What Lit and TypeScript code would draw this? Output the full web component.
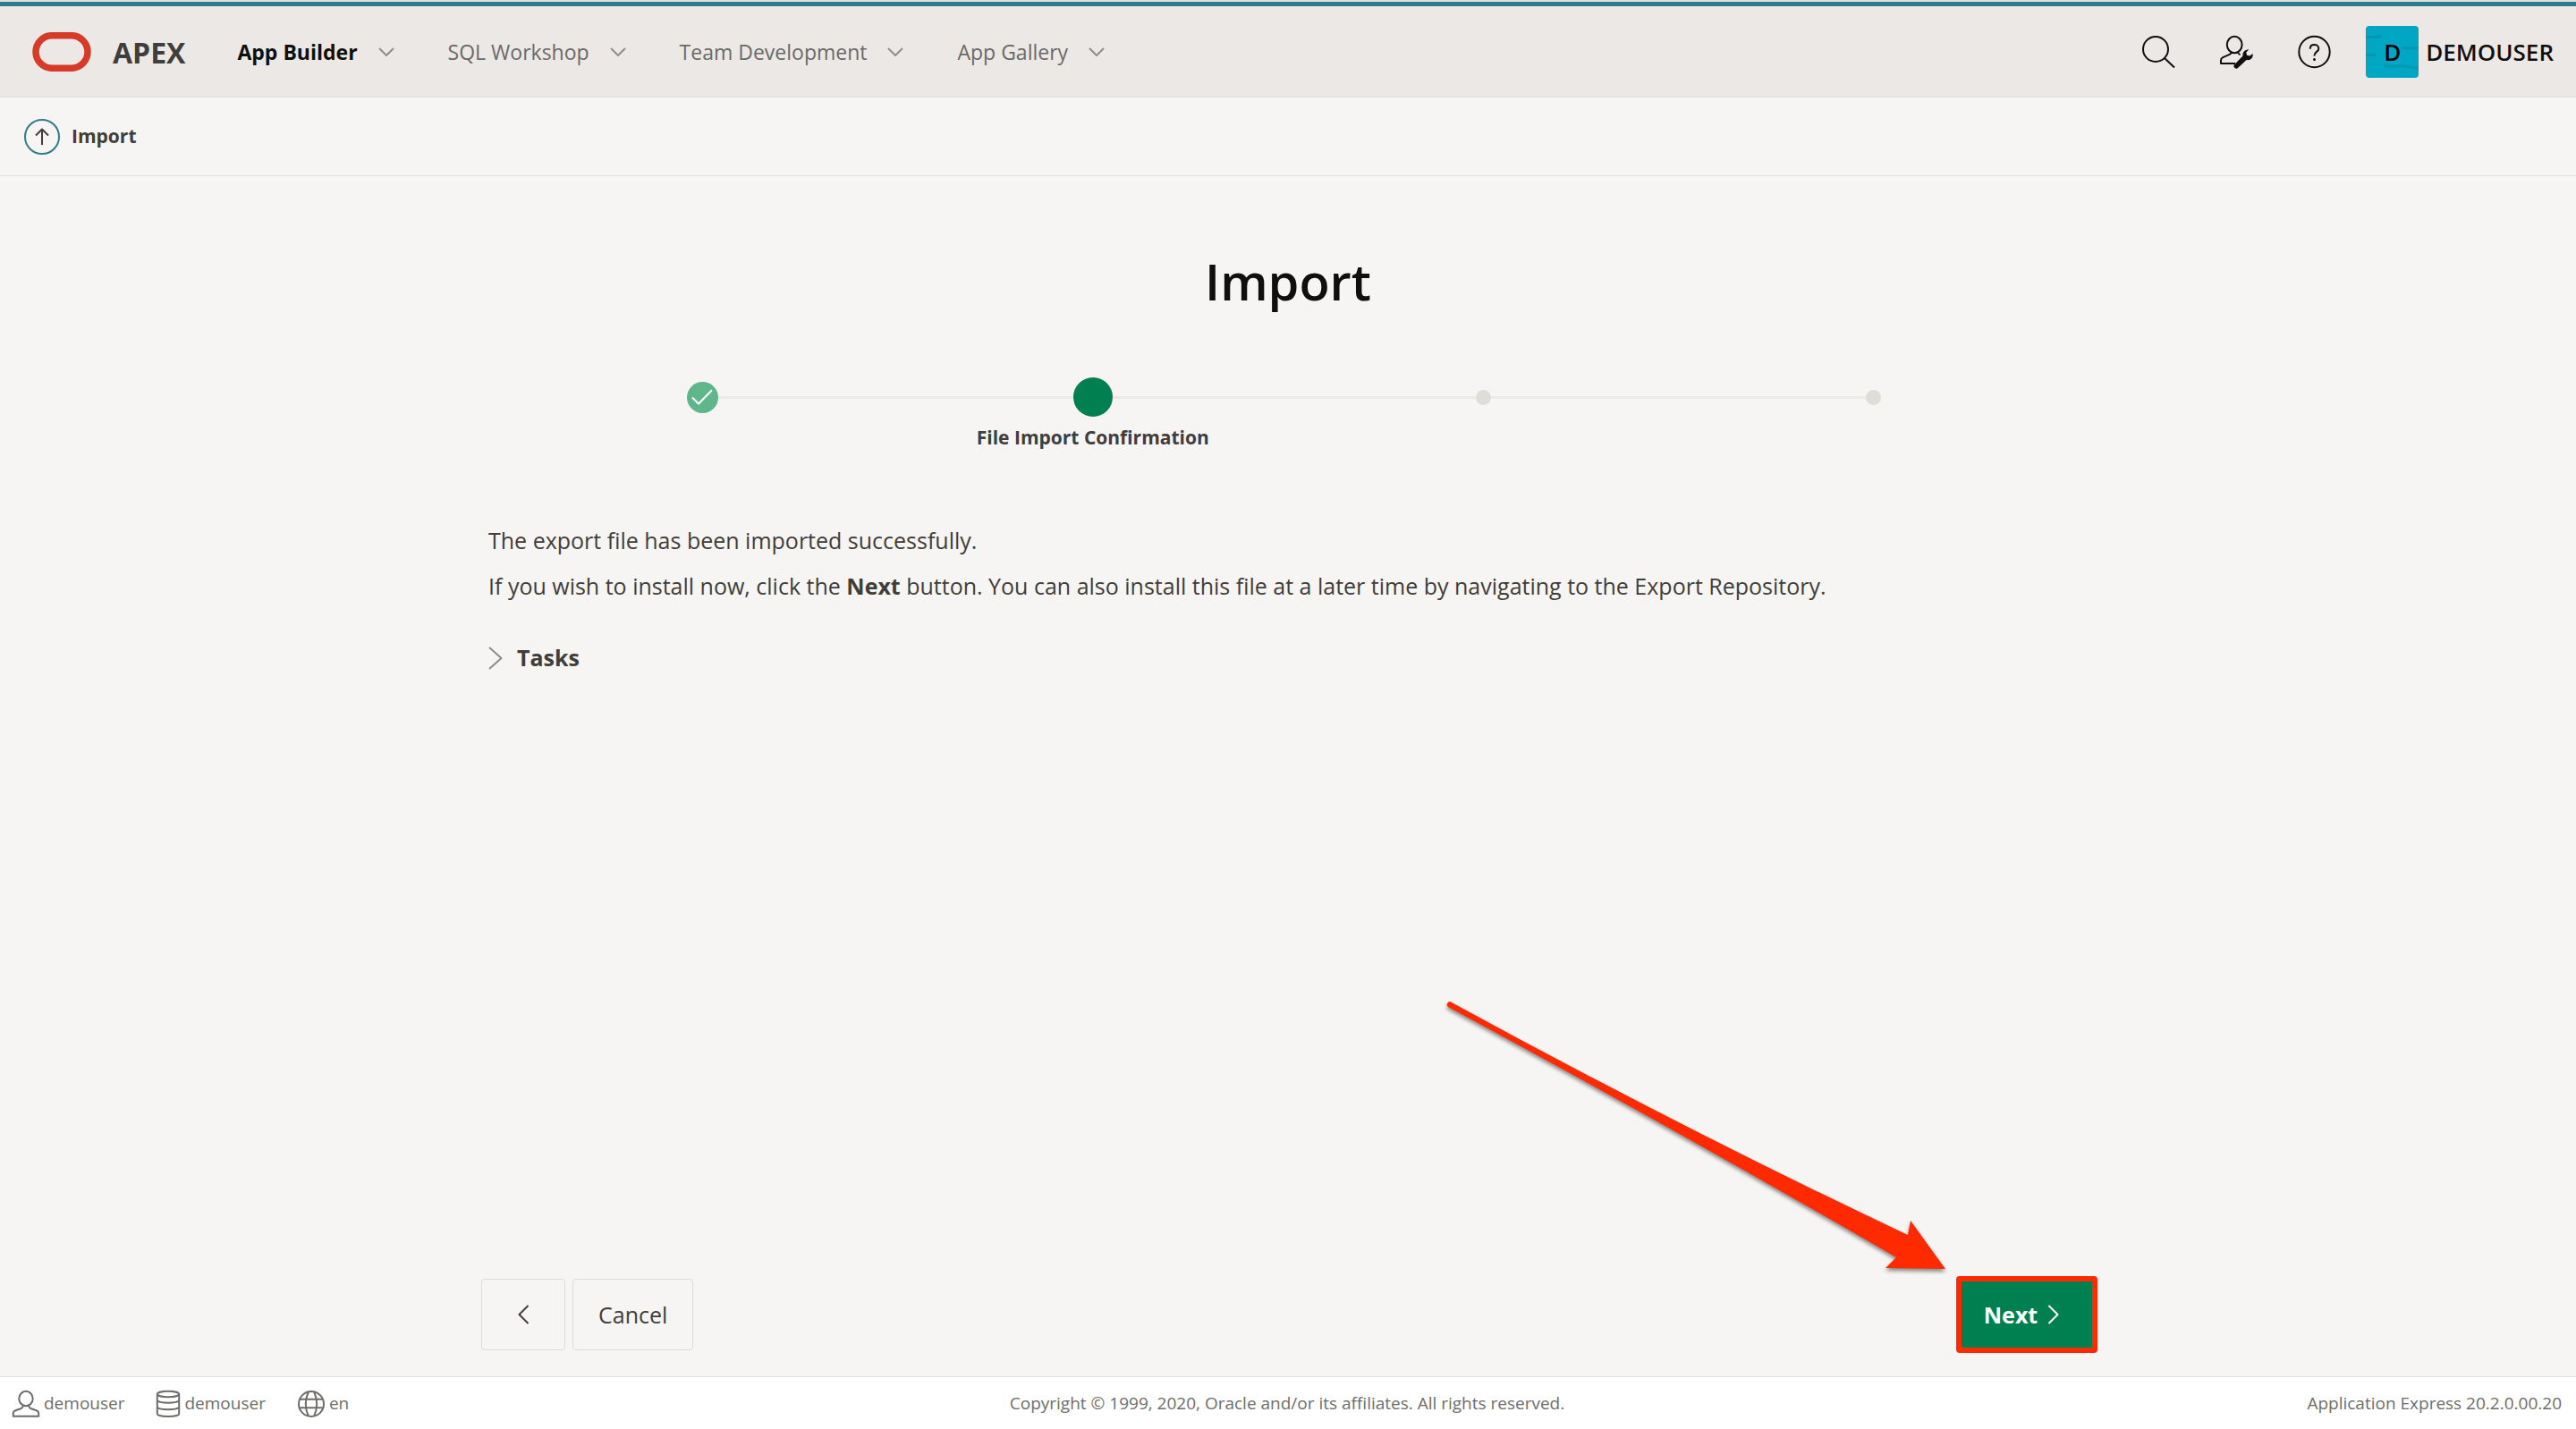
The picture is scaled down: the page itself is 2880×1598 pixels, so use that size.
import { LitElement, html, css, svg } from "lit";
import { customElement, property } from "lit/decorators.js";

const icons: Record<string, { box: string; art: unknown }> = {
  search: {
    box: "0 0 37 37",
    art: svg`<circle cx="15" cy="15" r="14"/><path d="M25 25 36 35.500"/>`,
  },
  admin: {
    box: "0 0 37 37",
    art: svg`<path d="M12.500 18.200c.2 1.600-.6 2.200-1.800 2.700l-7.400 3.200C1.600 24.900 1 26 1 27.600V31h16M20 18.200c.1 1.600.9 2.300 2.600 3.100"/>
      <ellipse cx="16.200" cy="10" rx="8.400" ry="9.200"/>
      <path fill="currentColor" stroke="none" d="M32.400 15.200c-4.600.2-7.600 3.400-6.900 7.400L16.300 31.900a2.700 2.700 0 0 0 3.900 3.900l9.400-8.800c4.200.9 7.700-2 7.100-7l-3.500 2.600-3.200-.8-.7-3.200z"/>`,
  },
  help: {
    box: "0 0 37 37",
    art: svg`<circle cx="18.500" cy="18" r="17.200"/><path d="M13.800 14.800v-.4c0-2.600 2-4.300 4.700-4.300s4.800 1.700 4.800 4.300c0 3.400-4.800 3.600-4.800 7.600v.6"/><circle cx="18.500" cy="26.500" r="1.500" fill="currentColor" stroke="none"/>`,
  },
  down: { box: "0 0 18 10", art: svg`<path d="M1 1 9 9 17 1"/>` },
  up: { box: "0 0 16 20", art: svg`<path d="M8 19V1.500M1 8.500l7-7 7 7"/>` },
  check: { box: "0 0 24 18", art: svg`<path d="M1 9.500 8 16.500 23 1.200"/>` },
  disclose: { box: "0 0 16 26", art: svg`<path d="M1 1 14.500 13 1 25"/>` },
  prev: { box: "0 0 12 22", art: svg`<path d="M11.500 1 1.500 11l10 10"/>` },
  next: { box: "0 0 12 22", art: svg`<path d="M.5 1l10 10-10 10"/>` },
  user: {
    box: "0 0 30 30",
    art: svg`<ellipse cx="15" cy="9" rx="7.700" ry="8.200"/><path d="M11.500 16.500c.3 2-.3 2.900-1.800 3.500l-6.900 2.500C1.500 23 .8 23.800.8 25.200v3.600h28.400v-3.600c0-1.400-.7-2.200-2-2.700L20.300 20c-1.500-.6-2.100-1.500-1.800-3.500"/>`,
  },
  database: {
    box: "0 0 26 30",
    art: svg`<ellipse cx="13" cy="4" rx="12.200" ry="3.200"/><path d="M.8 4v22c0 1.800 5.400 3 12.200 3s12.200-1.200 12.200-3V4M.8 11.500c1.500 1.300 6 2.200 12.200 2.200s10.700-.9 12.200-2.200M.8 19c1.500 1.300 6 2.200 12.200 2.200s10.700-.9 12.200-2.200"/>`,
  },
  globe: {
    box: "0 0 30 30",
    art: svg`<circle cx="15" cy="15" r="14"/><path d="M2.200 9.800h25.600M2.200 19.300h25.600M11.800 1.500C7.800 10.500 7.800 19.500 11.800 28.500M18.200 1.500c4 9 4 18 0 27"/>`,
  },
};

@customElement("app-icon")
export class AppIcon extends LitElement {
  static styles = css`
    :host { display: inline-flex; flex: none; }
    .glyph { display: block; fill: none; stroke: currentColor; stroke-linejoin: round; overflow: visible; }
  `;
  @property() name = "search";
  @property({ type: Number }) stroke = 2;

  render() {
    const { box, art } = icons[this.name];
    const [, , w, h] = box.split(" ");
    return html`<svg class="glyph" viewBox=${box} width=${w} height=${h} stroke-width=${this.stroke} aria-hidden="true">${art}</svg>`;
  }
}

@customElement("app-root")
export class AppRoot extends LitElement {
  static styles = css`
    :host {
      display: flex; flex-direction: column; min-height: 100vh;
      background: #f6f5f3; color: #403d3a;
      font: 25px/51px "Open Sans", "Noto Sans", sans-serif;
    }
    * { box-sizing: border-box; }
    a { color: inherit; text-decoration: none; }
    button { font: inherit; color: inherit; cursor: pointer; background: none; border: 0; padding: 0; }
    .topbar {
      display: flex; align-items: center; height: 109px; padding: 9px 25px 0 36px;
      background: #ece8e5; border-bottom: 2px solid #e5e3e1;
      box-shadow: inset 0 2px #dfe0e1, inset 0 7px #317c8b;
    }
    .brand { display: flex; align-items: center; gap: 24px; font-size: 32px; font-weight: 700; }
    .nav { display: flex; gap: 60px; margin-left: 58px; font-size: 23px; color: #6b6967; }
    .menu { display: flex; align-items: center; gap: 23px; }
    .current { color: #100f0e; font-weight: 700; }
    .chevron { color: #8f8d8b; }
    .tools { display: flex; align-items: center; gap: 50px; margin-left: auto; color: #100f0e; }
    .tool { display: flex; }
    .account { display: flex; align-items: center; gap: 8px; margin-left: -11px; font-size: 26px; font-weight: 600; }
    .avatar {
      display: grid; place-items: center; width: 59px; height: 58px; border-radius: 4px;
      background: #00a7c4; color: #000; position: relative;
    }
    .strokes { position: absolute; inset: 0; fill: none; stroke: #0098b3; stroke-width: 3; }
    .initial { position: relative; }
    .crumbs {
      display: flex; align-items: center; gap: 13px; height: 88px; padding: 0 27px;
      border-bottom: 1px solid #e5e3e1; font-size: 21px; font-weight: 700;
    }
    .up { display: grid; place-items: center; width: 40px; height: 40px; border: 2px solid #317c8b; border-radius: 50%; }
    .wizard {
      flex: 1; display: flex; flex-direction: column; width: 100%; max-width: 1804px;
      margin: 0 auto; padding: 81px 0 29px;
    }
    .title { margin: 0; font-size: 56px; line-height: 72px; font-weight: 600; text-align: center; color: #100f0e; }
    .steps { display: grid; grid-template-columns: repeat(4, 1fr); list-style: none; margin: 72px 29px 0; padding: 0; }
    .step { display: flex; flex-direction: column; align-items: center; }
    .track { display: grid; grid-template-columns: 1fr auto 1fr; align-items: center; width: 100%; height: 44px; }
    .line { height: 3px; background: #ebeae7; }
    .step:first-child .line:first-child, .step:last-child .line:last-child { background: none; }
    .dot { display: grid; place-items: center; width: 17px; height: 17px; border-radius: 50%; background: #dfddd8; }
    .done { width: 35px; height: 35px; background: #5fb68b; color: #fff; }
    .active { width: 44px; height: 44px; background: #008050; }
    .label { font-size: 21px; line-height: 47px; font-weight: 700; }
    .body { padding: 66px 8px 0; }
    .text { margin: 0; }
    .tasks { display: flex; align-items: center; gap: 16px; margin-top: 29px; font-weight: 700; }
    .actions { display: flex; gap: 8px; margin-top: auto; }
    .button { display: flex; align-items: center; justify-content: center; height: 80px; padding: 0 28px; border: 1px solid #dcdbd9; border-radius: 4px; }
    .back { width: 94px; }
    .forward { position: relative; margin-left: auto; }
    .primary { width: 152px; gap: 12px; padding: 0 12px 0 0; background: #008050; border-color: #008050; color: #fff; font-weight: 700; }
    .frame { position: absolute; inset: -3px; border: 6px solid #ff2a00; border-radius: 4px; pointer-events: none; }
    .arrow {
      position: absolute; right: 100%; bottom: 100%; width: 577px; height: 315px; overflow: visible;
      fill: #ff2a00; filter: drop-shadow(0 3px 2px rgba(0, 0, 0, 0.45)); pointer-events: none;
    }
    .footer {
      display: grid; grid-template-columns: 1fr auto 1fr; align-items: center; height: 59px;
      padding: 1px 16px 0 14px; background: #fff; border-top: 1px solid #e0dfdd;
      font-size: 19px; color: #6f6d6b;
    }
    .session { display: flex; gap: 36px; }
    .fact { display: flex; align-items: center; gap: 5px; }
    .version { text-align: right; }
  `;

  private menus = ["App Builder", "SQL Workshop", "Team Development", "App Gallery"];
  private tools = [["search", "Search"], ["admin", "Administration"], ["help", "Help"]];
  private steps = [
    { state: "done", label: "" },
    { state: "active", label: "File Import Confirmation" },
    { state: "", label: "" },
    { state: "", label: "" },
  ];
  private facts = [["user", "demouser"], ["database", "demouser"], ["globe", "en"]];

  render() {
    return html`
      <header class="topbar">
        <a class="brand" href="#home">
          <svg width="66" height="44" viewBox="0 0 66 44" aria-hidden="true">
            <rect x="4" y="3.700" width="58" height="36.600" rx="18.300" fill="none" stroke="#d63b2a" stroke-width="7.500"/>
          </svg>
          <span>APEX</span>
        </a>
        <nav class="nav">
          ${this.menus.map((m, i) => html`
            <button class="menu ${i === 0 ? "current" : ""}">${m}<app-icon class="chevron" name="down"></app-icon></button>`)}
        </nav>
        <div class="tools">
          ${this.tools.map(([icon, label]) => html`<button class="tool" aria-label=${label}><app-icon name=${icon}></app-icon></button>`)}
          <button class="account">
            <span class="avatar">
              <svg class="strokes" width="59" height="58" viewBox="0 0 59 58" aria-hidden="true">
                <path d="M0 12.500h10l8-1M40 25h18M0 32.500h11M20 44c8 3 14 0 24 1l14 2.500"/>
              </svg>
              <span class="initial">D</span>
            </span>
            <span>DEMOUSER</span>
          </button>
        </div>
      </header>
      <nav class="crumbs">
        <a class="up" href="#up" aria-label="Up"><app-icon name="up"></app-icon></a>
        <span>Import</span>
      </nav>
      <main class="wizard">
        <h1 class="title">Import</h1>
        <ol class="steps">
          ${this.steps.map((s) => html`
            <li class="step">
              <div class="track">
                <span class="line"></span>
                <span class="dot ${s.state}">${s.state === "done" ? html`<app-icon name="check"></app-icon>` : ""}</span>
                <span class="line"></span>
              </div>
              ${s.label ? html`<span class="label">${s.label}</span>` : ""}
            </li>`)}
        </ol>
        <section class="body">
          <p class="text">The export file has been imported successfully.</p>
          <p class="text">If you wish to install now, click the <strong>Next</strong> button. You can also install this file at a later time by navigating to the Export Repository.</p>
          <button class="tasks" aria-expanded="false"><app-icon class="chevron" name="disclose"></app-icon>Tasks</button>
        </section>
        <div class="actions">
          <button class="button back" aria-label="Previous"><app-icon name="prev"></app-icon></button>
          <button class="button">Cancel</button>
          <div class="forward">
            <button class="button primary">Next<app-icon name="next"></app-icon></button>
            <span class="frame"></span>
            <svg class="arrow" viewBox="0 0 577 315" aria-hidden="true">
              <path d="M10 6Q266 146 520 266L523 250L562 304L495 303L507 291Q255 145 6 11A2.800 2.800 0 0 1 10 6Z"/>
            </svg>
          </div>
        </div>
      </main>
      <footer class="footer">
        <div class="session">
          ${this.facts.map(([icon, label]) => html`<span class="fact"><app-icon name=${icon}></app-icon>${label}</span>`)}
        </div>
        <span>Copyright © 1999, 2020, Oracle and/or its affiliates. All rights reserved.</span>
        <span class="version">Application Express 20.2.0.00.20</span>
      </footer>
    `;
  }
}
